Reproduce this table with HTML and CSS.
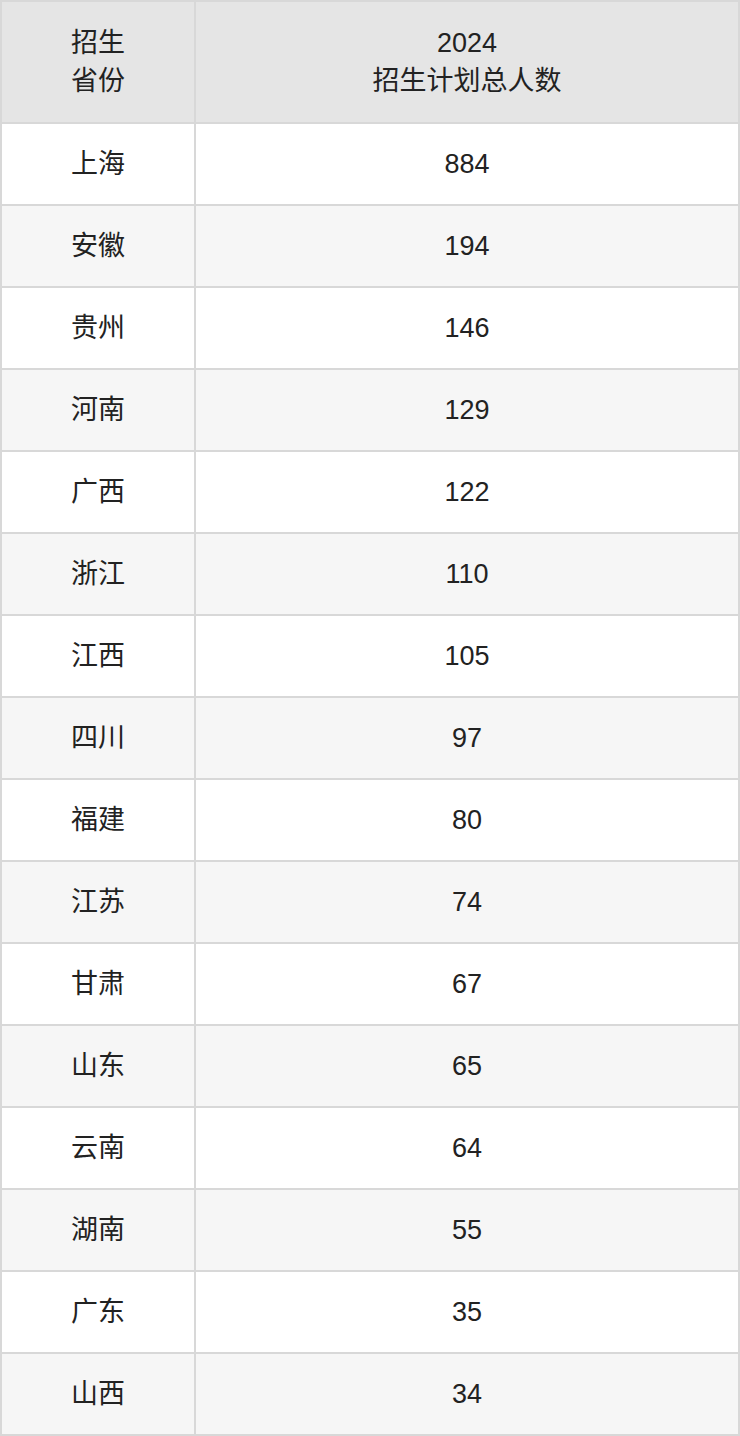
FILE: index.html
```html
<!DOCTYPE html>
<html lang="zh-CN">
<head>
<meta charset="utf-8">
<link rel="stylesheet" href="styles.css">
</head>
<body>
<div class="table">
  <div class="cell head">招生<br>省份</div>
  <div class="cell head">2024<br>招生计划总人数</div>
  <div class="cell">上海</div><div class="cell">884</div>
  <div class="cell alt">安徽</div><div class="cell alt">194</div>
  <div class="cell">贵州</div><div class="cell">146</div>
  <div class="cell alt">河南</div><div class="cell alt">129</div>
  <div class="cell">广西</div><div class="cell">122</div>
  <div class="cell alt">浙江</div><div class="cell alt">110</div>
  <div class="cell">江西</div><div class="cell">105</div>
  <div class="cell alt">四川</div><div class="cell alt">97</div>
  <div class="cell">福建</div><div class="cell">80</div>
  <div class="cell alt">江苏</div><div class="cell alt">74</div>
  <div class="cell">甘肃</div><div class="cell">67</div>
  <div class="cell alt">山东</div><div class="cell alt">65</div>
  <div class="cell">云南</div><div class="cell">64</div>
  <div class="cell alt">湖南</div><div class="cell alt">55</div>
  <div class="cell">广东</div><div class="cell">35</div>
  <div class="cell alt">山西</div><div class="cell alt">34</div>
</div>
</body>
</html>
```
FILE: styles.css
```css
html, body {
  margin: 0;
  padding: 0;
  background: #ffffff;
}
.table {
  width: 740px;
  box-sizing: border-box;
  display: grid;
  grid-template-columns: 192px 1fr;
  grid-template-rows: 120px;
  grid-auto-rows: 80px;
  gap: 2px;
  padding: 2px;
  background: #d8d8d8;
  font-family: "Liberation Sans", "Noto Sans CJK SC", sans-serif;
  font-size: 27px;
  color: #222222;
}
.cell {
  background: #ffffff;
  display: flex;
  align-items: center;
  justify-content: center;
  text-align: center;
  line-height: 38px;
}
.cell.alt {
  background: #f6f6f6;
}
.cell.head {
  background: #e5e5e5;
}
```
